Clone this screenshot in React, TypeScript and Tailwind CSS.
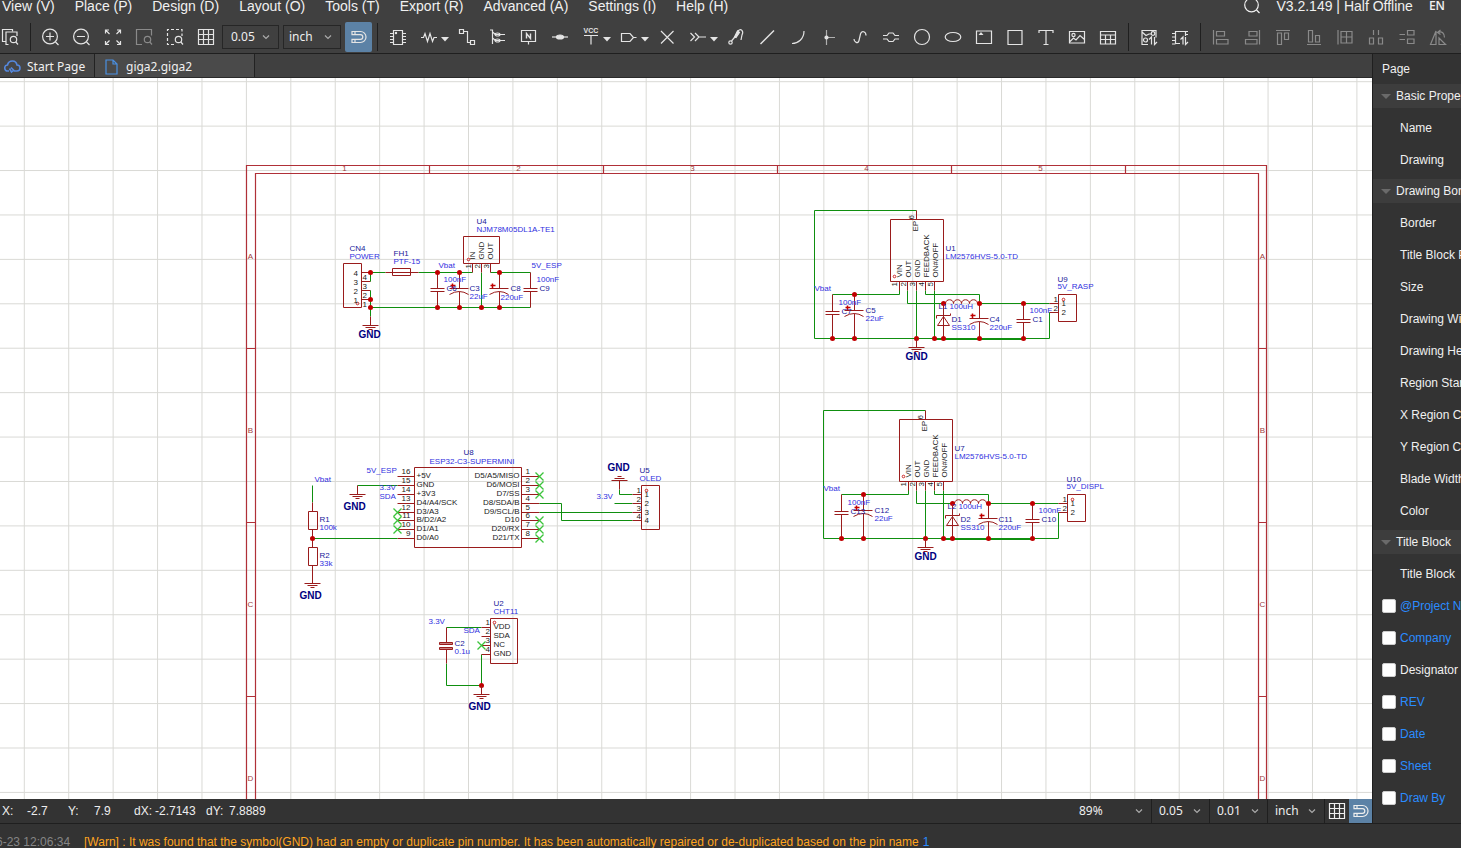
import React from "react";

const WIRE = "#0f8f0f";
const PART = "#9a1c1c";
const DOT = "#c00000";
const REF = "#20209a";
const VALUE = "#3030e0";

/* ---------- icons ---------- */

interface IconProps {
  children: React.ReactNode;
  size?: number;
}

const Icon = ({ children, size = 20 }: IconProps) => (
  <svg width={size} height={size} viewBox="0 0 20 20" fill="none" stroke="currentColor" strokeWidth="1.2" className="shrink-0" aria-hidden="true">
    {children}
  </svg>
);

const Lens = () => (
  <>
    <circle cx="13.5" cy="12.5" r="3.2" />
    <path d="M15.8 15l2.2 2.5" />
  </>
);

const GridIcon = () => (
  <Icon>
    <path d="M2.5 2.5h15v15h-15zM2.5 7.5h15M2.5 12.5h15M7.5 2.5v15M12.5 2.5v15" />
  </Icon>
);

const MagnetIcon = () => (
  <Icon>
    <path d="M3 4.5h8.5a5.5 5.5 0 0 1 0 11H3v-3.2h8.5a2.3 2.3 0 0 0 0-4.6H3z" />
    <path d="M6 4.5v3.2M6 12.3v3.2" />
  </Icon>
);

const Chevron = () => (
  <svg width="8" height="8" viewBox="0 0 8 8" fill="none" stroke="#aaaaaa" strokeWidth="1.2" className="pointer-events-none absolute right-2" aria-hidden="true">
    <path d="M1 2.5l3 3 3-3" />
  </svg>
);

interface Tool {
  label: string;
  icon: React.ReactNode;
  menu?: boolean;
  dim?: boolean;
}

const viewTools: Tool[] = [
  { label: "Zoom In", icon: <><circle cx="9" cy="9.5" r="7.4" /><path d="M9 5.5v8M5 9.5h8M14.5 15l3 3" /></> },
  { label: "Zoom Out", icon: <><circle cx="9" cy="9.5" r="7.4" /><path d="M5 9.5h8M14.5 15l3 3" /></> },
  { label: "Fit All", icon: <path d="M2.5 6.500v-3.500h3.500M2.5 3l4 4M17.5 6.5V3H14M17.5 3l-4 4M2.5 14v3.500H6M2.5 17.5l4-4M17.5 14v3.500H14M17.5 17.5l-4-4" /> },
  { label: "Fit Selected", dim: true, icon: <><path d="M8 17.5H2.5v-15h15v6" /><Lens /></> },
  { label: "Zoom Area", icon: <><path d="M9 17.5H2.5v-15H17v6.500" strokeDasharray="3 2" /><Lens /></> },
];

const placeTools: Tool[] = [
  { label: "Device", icon: <><path d="M5.5 3.5h9v14h-9zM2 6.5h3.500M2 9.5h3.500M2 12.5h3.500M2 15.5h3.500M14.5 6.5H18M14.5 9.5H18M14.5 12.5H18M14.5 15.5H18" /><circle cx="8" cy="6" r=".6" /></> },
  { label: "Common Library", menu: true, icon: <path d="M2 10.5h2.500l1.5-4 2.500 8 2.500-8 2.500 8 1.5-4H18" /> },
  { label: "Wire", icon: <path d="M2.5 2.5h4v4h-4zM13.5 13.5h4v4h-4zM6.5 4.5h4v11h3" /> },
  { label: "Bus", icon: <><path d="M2 3h2.500v14M4.5 5l3 2.500H17M4.5 11l3 2.500H17" /><ellipse cx="9.5" cy="7.5" rx="2.5" ry="1.5" /><ellipse cx="9.5" cy="13.5" rx="2.5" ry="1.5" /></> },
  { label: "Net Label", icon: <><path d="M2.5 3.5h14v11h-14zM9.5 14.5v3" /><path d="M7.5 11.5v-5l4 5v-5" strokeWidth="1.4" /></> },
  { label: "Junction", icon: <><path d="M2 10h16" /><ellipse cx="10" cy="10" rx="3.5" ry="2" fill="currentColor" /></> },
  { label: "Net Flag", menu: true, icon: <><path d="M3 8.5h14M10 8.5v9" /><text x="10" y="6" textAnchor="middle" fontSize="7" fontWeight="bold" fill="currentColor" stroke="none" className="font-['Liberation_Sans',sans-serif]">VCC</text></> },
  { label: "Net Port", menu: true, icon: <path d="M2.5 6.5H11l3.500 4-3.500 4H2.5zM14.5 10.5h3" /> },
  { label: "No Connect", icon: <path d="M4 4l12.500 12.500M16.5 4L4 16.5" /> },
  { label: "Bus Entry", menu: true, icon: <path d="M2.5 6l4 4-4 4M7 6l4 4-4 4M11 10h7" /> },
  { label: "Probe", icon: <><circle cx="4.5" cy="15.5" r="1.7" /><path d="M5.5 14l5-6" /><path d="M8.5 10l3-6 2 1.500-3.500 5z" fill="currentColor" /><path d="M12 4c3-3 6 0 4 4l-1 5" /></> },
  { label: "Line", icon: <path d="M3.5 17L17 3.5" strokeWidth="1.5" /> },
  { label: "Arc", icon: <path d="M4 16.5C10 16.5 16 12 16 4" /> },
  { label: "Center", icon: <><path d="M7.5 3v15M7.5 10.5H16" stroke="#b0b0b0" /><circle cx="7.5" cy="10.5" r="1.5" fill="currentColor" /></> },
  { label: "Bezier", icon: <path d="M4 12c0 3 4 5.500 5 1.500l1.500-6.500c1-4 5.500-2.500 5.500 1.500" /> },
  { label: "Bus Ripper", icon: <path d="M2 8.5h4l2-2.500h4l2 2.500h4M2 12h4l2 2.500h4l2-2.500h4" /> },
  { label: "Circle", icon: <circle cx="10" cy="10" r="7.5" /> },
  { label: "Ellipse", icon: <ellipse cx="10" cy="10" rx="7.8" ry="4.5" /> },
  { label: "Sheet Symbol", icon: <><path d="M2.5 4h15v12.500h-15z" /><path d="M4.5 8L7 5l2.500 3z" fill="currentColor" strokeWidth="0" /></> },
  { label: "Rectangle", icon: <path d="M3 3.5h14v14H3z" /> },
  { label: "Text", icon: <path d="M3 6V3.5h14V6M10 3.5v14M7.5 17.5h5" /> },
  { label: "Image", icon: <><path d="M2.5 4.5h15V16h-15zM2.5 15l4-4L9 13l4-4.500 4.500 4" /><circle cx="6.5" cy="8" r="1.6" /></> },
  { label: "Table", icon: <path d="M2.5 4.5h15V17h-15zM2.5 8h15M2.5 12.5h15M7.5 8v9M12.5 8v9" /> },
];

const convertTools: Tool[] = [
  { label: "Convert Schematic to PCB", icon: <><path d="M9 17.5H3v-14h14v7M3 5l4 3.500L10 7h3" /><circle cx="14" cy="6.5" r="1.8" /><circle cx="6.5" cy="13" r="2" /><path d="M12.5 17.5V10L10 12.5M15.5 10v7.500L18 15" /></> },
  { label: "Update Footprint", icon: <path d="M10 16.5H5.5v-12h10V9M2 6.5h3.500M2 10h3.500M2 13.5h3.500M2 17h3.500M15.5 4.5H18M15.5 7.5H18M13 17.5V10l-2.500 2.500M15.5 10v7.500L18 15" /> },
];

const alignTools: Tool[] = [
  { label: "Align Left", icon: <path d="M2.5 3v14.500M5.5 4.5h8V9h-8zM5.5 12.5H17V17H5.5z" /> },
  { label: "Align Right", icon: <path d="M17.5 3v14.500M7 4.5h8V9H7zM3.5 12.5H15V17H3.5z" /> },
  { label: "Align Top", icon: <path d="M3 3.5h14M4.5 6h4v11.500h-4zM11.5 6h4v6.500h-4z" /> },
  { label: "Align Bottom", icon: <path d="M3 17.5h14M4.5 3.5h4V15h-4zM11.5 8.5h4V15h-4z" /> },
  { label: "Align Grid", icon: <path d="M3 3v14.500M6 4.5h11V16H6zM6 10h11M11.5 4.5V16" /> },
  { label: "Distribute Horizontally", icon: <path d="M7.5 3v5M12.5 3v5M3.5 11h4v6h-4zM12.5 11h4v6h-4z" /> },
  { label: "Distribute Vertically", icon: <path d="M2.5 7.5H8M2.5 12.5H8M10.5 3.5H17V8h-6.500zM10.5 12H17v4.500h-6.500z" /> },
  { label: "Rotate Left", icon: <path d="M2.5 17.5L8 4v13.500zM11 17.5V11l6.500 6.500zM10 5.5c4-2 6.500 1 6.500 5M12.5 3l-3 2.500 3 2" /> },
  { label: "Rotate Right", icon: <path d="M2.5 17L9 4v13z" /> },
];

/* ---------- top bars ---------- */

const menus = ["View (V)", "Place (P)", "Design (D)", "Layout (O)", "Tools (T)", "Export (R)", "Advanced (A)", "Settings (I)", "Help (H)"];

const MenuBar = () => (
  <header className="flex h-3 items-center justify-between pr-4 pl-[2px] text-sm leading-3 text-[#f0f0f0]">
    <nav className="flex gap-5 whitespace-nowrap">
      {menus.map((m) => <button key={m} type="button" className="leading-3">{m}</button>)}
    </nav>
    <div className="flex items-center gap-4 leading-3 whitespace-nowrap">
      <button type="button" aria-label="Search" className="-mr-0.5">
        <Icon><circle cx="9.5" cy="9" r="6.8" /><path d="M14.5 14l3 3" /></Icon>
      </button>
      <span>V3.2.149 | Half Offline</span>
      <button type="button" className="font-['Open_Sans',sans-serif] text-xs leading-3 font-semibold">EN</button>
    </div>
  </header>
);

const ToolButton = ({ label, icon, menu, dim }: Tool) => (
  <button type="button" aria-label={label} title={label} className={`flex h-7 shrink-0 items-center ${menu ? "w-[38px] gap-0.5 pl-1.5" : "w-[31px] justify-center"} ${dim ? "text-[#8a8a8a]" : "text-[#e4e4e4]"}`}>
    <Icon>{icon}</Icon>
    {menu && (
      <svg width="8" height="5" viewBox="0 0 8 5" className="mt-1 shrink-0" aria-hidden="true"><path d="M0 0h8L4 4.5z" fill="#e4e4e4" /></svg>
    )}
  </button>
);

const Separator = () => (
  <div className="flex h-7 w-[10px] shrink-0 justify-center"><div className="w-px bg-[#1f1f1f]" /></div>
);

const Picker = ({ label, value, className }: { label: string; value: string; className: string }) => (
  <div className={`relative flex shrink-0 items-center font-['Noto_Sans',sans-serif] text-xs text-[#eeeeee] ${className}`}>
    <select aria-label={label} defaultValue={value} className="h-full w-full appearance-none bg-transparent outline-none">
      <option>{value}</option>
    </select>
    <Chevron />
  </div>
);

const Toolbar = () => (
  <div className="mt-[9px] flex h-8 items-center overflow-hidden">
    <div className="-ml-1.5 flex"><ToolButton label="Find" icon={<><path d="M6 14.5H2.5v-12h10v2" /><path d="M8.5 17.5H6V5h11v4" /><Lens /></>} /></div>
    <Separator />
    {viewTools.map((t) => <ToolButton key={t.label} {...t} />)}
    <button type="button" aria-label="Grid" className="flex h-7 w-[31px] shrink-0 items-center justify-center text-[#e4e4e4]"><GridIcon /></button>
    <Picker label="Grid size" value="0.05" className="ml-px h-6 w-[57px] border border-[#262626] pl-2" />
    <Picker label="Unit" value="inch" className="ml-1 h-6 w-[58px] border border-[#262626] pl-[5px]" />
    <button type="button" aria-label="Snap" className="ml-1 flex h-[30px] w-[27px] shrink-0 items-center justify-center rounded-xs bg-[#5c82a6] text-[#e4e4e4]"><MagnetIcon /></button>
    <Separator />
    {placeTools.map((t) => <ToolButton key={t.label} {...t} />)}
    <Separator />
    {convertTools.map((t) => <ToolButton key={t.label} {...t} />)}
    <Separator />
    {alignTools.map((t) => <ToolButton key={t.label} {...t} dim />)}
  </div>
);

const Tabs = () => (
  <div className="flex h-6 border-b border-[#2a2a2a] bg-[#404040] font-['Noto_Sans',sans-serif] text-xs text-[#f0f0f0]">
    <button type="button" className="flex w-[95px] items-center gap-1.5 border-r border-[#222222] bg-[#464646] pt-0.5 pl-1 whitespace-nowrap">
      <svg width="17" height="14" viewBox="0 0 17 14" fill="none" stroke="#5588dd" strokeWidth="1.6" aria-hidden="true">
        <path d="M5 11H4a3 3 0 0 1-.5-6C4 2.5 6 1 8.5 1S12.5 2.5 13 5a3 3 0 0 1 0 6h-2.500L7 7.500M5.5 8.5l2 3.500 2.500-2" />
      </svg>
      Start Page
    </button>
    <button type="button" className="flex w-40 items-center gap-2 border-r border-[#222222] bg-[#4a4a4a] pt-0.5 pl-2.5 whitespace-nowrap">
      <svg width="13" height="16" viewBox="0 0 13 16" fill="none" stroke="#4a90e2" strokeWidth="1.2" aria-hidden="true">
        <path d="M1 1h7l4 4v10H1zM8 1v4h4" />
      </svg>
      giga2.giga2
    </button>
  </div>
);

/* ---------- schematic primitives ---------- */

const Wire = ({ d }: { d: string }) => <path d={d} stroke={WIRE} fill="none" />;
const Part = ({ d }: { d: string }) => <path d={d} stroke={PART} fill="none" />;

const Dots = ({ at }: { at: number[][] }) => (
  <>{at.map(([x, y]) => <circle key={`${x}-${y}`} cx={x} cy={y} r="2.5" fill={DOT} />)}</>
);

interface TextProps {
  x: number;
  y: number;
  children: React.ReactNode;
}

const Ref = ({ x, y, children }: TextProps) => <text x={x} y={y} fill={REF}>{children}</text>;
const Value = ({ x, y, children }: TextProps) => <text x={x} y={y} fill={VALUE}>{children}</text>;
const Pin = ({ x, y, children, end }: TextProps & { end?: boolean }) => (
  <text x={x} y={y} fill="#222222" textAnchor={end ? "end" : "start"}>{children}</text>
);
const VPin = ({ x, y, children }: TextProps) => (
  <text transform={`translate(${x} ${y}) rotate(-90)`} fill="#222222">{children}</text>
);
const PinOne = ({ x, y }: { x: number; y: number }) => <circle cx={x} cy={y} r="1.3" fill="none" stroke={DOT} strokeWidth=".8" />;

const Ground = ({ x, y, up, tx, ty }: { x: number; y: number; up?: boolean; tx: number; ty: number }) => {
  const s = up ? -1 : 1;
  return (
    <>
      <Part d={`M${x} ${y - 9 * s}V${y}M${x - 8} ${y}h16M${x - 5} ${y + 2 * s}h10M${x - 2} ${y + 4 * s}h4`} />
      <text x={tx} y={ty} fill="#000080" className="text-[10px] font-bold">GND</text>
    </>
  );
};

const Cap = ({ x, y, top, bottom }: { x: number; y: number; top: number; bottom: number }) => (
  <Part d={`M${x} ${top}V${y}M${x - 7} ${y}h14M${x - 7} ${y + 3}h14M${x} ${y + 3}V${bottom}`} />
);

const PolCap = ({ x, y, top, bottom }: { x: number; y: number; top: number; bottom: number }) => (
  <>
    <Part d={`M${x} ${top}V${y}M${x - 10} ${y}h19M${x - 10} ${y + 6}q10 -6 19 0M${x} ${y + 3}V${bottom}`} />
    <path d={`M${x - 9} ${y - 3}h5M${x - 7} ${y - 5}v5`} stroke={DOT} strokeWidth="1.5" />
  </>
);

const NoConnect = ({ x, y }: { x: number; y: number }) => (
  <path d={`M${x - 4} ${y - 4}l8 8M${x + 4} ${y - 4}l-8 8`} stroke="#3cc43c" strokeWidth="1.3" />
);

/* ---------- schematic blocks ---------- */

const PowerInput = () => (
  <g>
    <Part d="M343 263h18v44h-18zM361 272h9M361 281h9M361 290h9M361 299h9" />
    <Wire d="M370 272v9M370 290v26M370 272h15M418 272h54M490 272h40M370 307h160M481 272v35" />
    <Part d="M385 272h33M392 268h18v7h-18zM463 236h36v27h-36zM472 263v9M481 263v9M490 263v9" />
    <Cap x={437} y={288} top={272} bottom={307} />
    <PolCap x={459} y={288} top={272} bottom={307} />
    <PolCap x={499} y={288} top={272} bottom={307} />
    <Cap x={530} y={288} top={272} bottom={307} />
    <Dots at={[[370, 272], [370, 299], [370, 307], [437, 272], [459, 272], [499, 272], [437, 307], [459, 307], [481, 307], [499, 307]]} />
    <Ground x={370} y={325} tx={358} ty={337} />
    <PinOne x={357} y={303} />
    <PinOne x={468} y={259} />
    {[4, 3, 2, 1].map((n, i) => (
      <React.Fragment key={n}>
        <Pin x={353} y={275 + i * 9}>{n}</Pin>
        <Pin x={362} y={279 + i * 9}>{n}</Pin>
      </React.Fragment>
    ))}
    {["IN", "GND", "OUT"].map((name, i) => (
      <React.Fragment key={name}>
        <VPin x={474 + i * 9} y={259}>{name}</VPin>
        <VPin x={470 + i * 9} y={268}>{i + 1}</VPin>
      </React.Fragment>
    ))}
    <Ref x={349} y={250}>CN4</Ref>
    <Value x={349} y={258}>POWER</Value>
    <Ref x={393} y={255}>FH1</Ref>
    <Value x={393} y={263}>PTF-15</Value>
    <Ref x={476} y={223}>U4</Ref>
    <Value x={476} y={231}>NJM78M05DL1A-TE1</Value>
    <Value x={438} y={267}>Vbat</Value>
    <Value x={531} y={267}>5V_ESP</Value>
    <Value x={443} y={281}>100nF</Value>
    <Ref x={446} y={290}>C6</Ref>
    <Ref x={469} y={290}>C3</Ref>
    <Value x={469} y={298}>22uF</Value>
    <Ref x={510} y={290}>C8</Ref>
    <Value x={500} y={299}>220uF</Value>
    <Value x={536} y={281}>100nF</Value>
    <Ref x={539} y={290}>C9</Ref>
  </g>
);

interface BuckProps {
  x: number;
  y: number;
  chip: string;
  caps: string[];
  coil: string;
  diode: string;
  conn: string;
  out: string;
}

// origin is the top left corner of the feedback loop
const Buck = ({ x, y, chip, caps, coil, diode, conn, out }: BuckProps) => (
  <g transform={`translate(${x} ${y})`}>
    <Wire d="M102 0H0V128H235V102H243M18 84H85V75M93 80V93H129M111 80V84H165V93M102 80V128M120 80V128M165 93H235" />
    <path d="M120 128.500H209" stroke={WIRE} strokeWidth="2" />
    <Part d="M76 9h53v62H76zM102 0v9M85 71v9M93 71v9M102 71v9M111 71v9M120 71v9" />
    <Part d="M129 93h2c0-5 8-5 8 0c0-5 8-5 8 0c0-5 8-5 8 0c0-5 8-5 8 0h2" />
    <Part d="M129 93v35M123 115h12l-6-9zM122 108v-3h14v-2" />
    <Part d="M244 84h18v27h-18zM235 93h9M235 102h9" />
    <Cap x={18} y={101} top={84} bottom={128} />
    <PolCap x={40} y={100} top={84} bottom={128} />
    <PolCap x={165} y={108} top={93} bottom={128} />
    <Cap x={209} y={109} top={93} bottom={128} />
    <Dots at={[[40, 84], [129, 93], [165, 93], [209, 93], [18, 128], [40, 128], [102, 128], [120, 128], [129, 128], [165, 128], [209, 128]]} />
    <Ground x={102} y={137} tx={91} ty={149} />
    <PinOne x={80} y={66} />
    <PinOne x={249} y={89} />
    <VPin x={99} y={9}>6</VPin>
    <VPin x={103} y={21}>EP</VPin>
    {["VIN", "OUT", "GND", "FEEDBACK", "ON#/OFF"].map((name, i) => (
      <React.Fragment key={name}>
        <VPin x={87 + i * 9} y={67}>{name}</VPin>
        <VPin x={82 + i * 9} y={76}>{i + 1}</VPin>
      </React.Fragment>
    ))}
    <Pin x={247} y={95}>1</Pin>
    <Pin x={247} y={104}>2</Pin>
    <Pin x={239} y={91}>1</Pin>
    <Pin x={239} y={100}>2</Pin>
    <Ref x={131} y={40}>{chip}</Ref>
    <Value x={131} y={48}>LM2576HVS-5.0-TD</Value>
    <Value x={0} y={80}>Vbat</Value>
    <Value x={24} y={94}>100nF</Value>
    <Ref x={27} y={103}>{caps[0]}</Ref>
    <Ref x={51} y={102}>{caps[1]}</Ref>
    <Value x={51} y={110}>22uF</Value>
    <Ref x={124} y={98}>{coil}</Ref>
    <Value x={135} y={98}>100uH</Value>
    <Ref x={137} y={111}>{diode}</Ref>
    <Value x={137} y={119}>SS310</Value>
    <Ref x={175} y={111}>{caps[2]}</Ref>
    <Value x={175} y={119}>220uF</Value>
    <Value x={215} y={102}>100nF</Value>
    <Ref x={218} y={111}>{caps[3]}</Ref>
    <Ref x={243} y={71}>{conn}</Ref>
    <Value x={243} y={78}>{out}</Value>
  </g>
);

const leftPins = ["+5V", "GND", "+3V3", "D4/A4/SCK", "D3/A3", "B/D2/A2", "D1/A1", "D0/A0"];
const rightPins = ["D5/A5/MISO", "D6/MOSI", "D7/SS", "D8/SDA/B", "D9/SCL/B", "D10", "D20/RX", "D21/TX"];
const pinY = [476, 485, 494, 503, 512, 520, 529, 538];

const Controller = () => (
  <g>
    <Part d="M414 467h107v80H414z" />
    {pinY.map((y, i) => (
      <React.Fragment key={y}>
        <Part d={`M397 ${y}h17M521 ${y}h18`} />
        <Pin x={416} y={y + 1}>{leftPins[i]}</Pin>
        <Pin x={410} y={y - 3} end>{16 - i}</Pin>
        <Pin x={519} y={y + 1} end>{rightPins[i]}</Pin>
        <Pin x={525} y={y - 3}>{i + 1}</Pin>
        {i > 3 && i < 7 && <NoConnect x={397} y={y} />}
        {i !== 3 && i !== 4 && <NoConnect x={539} y={y} />}
      </React.Fragment>
    ))}
    <Wire d="M357 485h40M312 538h85M312 485v17M539 503h22v17h71M539 512h93" />
    <Ground x={357} y={494} tx={343} ty={509} />
    <Part d="M312 502v9M308 511h9v18h-9zM312 529v18M308 547h9v18h-9zM312 565v10" />
    <Dots at={[[312, 538]]} />
    <Ground x={312} y={583} tx={299} ty={598} />
    <Value x={314} y={481}>Vbat</Value>
    <Ref x={319} y={521}>R1</Ref>
    <Value x={319} y={529}>100k</Value>
    <Ref x={319} y={557}>R2</Ref>
    <Value x={319} y={565}>33k</Value>
    <Value x={366} y={472}>5V_ESP</Value>
    <Value x={379} y={489}>3.3V</Value>
    <Value x={379} y={498}>SDA</Value>
    <Ref x={463} y={454}>U8</Ref>
    <Value x={429} y={463}>ESP32-C3-SUPERMINI</Value>
  </g>
);

const Display = () => (
  <g>
    <Wire d="M619 489v5h13M614 503h18" />
    <Part d="M641 485h18v44h-18z" />
    {[494, 503, 512, 520].map((y, i) => (
      <React.Fragment key={y}>
        <Part d={`M632 ${y}h9`} />
        <Pin x={644} y={y + 2}>{i + 1}</Pin>
        <Pin x={636} y={y - 2}>{i + 1}</Pin>
      </React.Fragment>
    ))}
    <PinOne x={646} y={490} />
    <Ground x={619} y={480} up tx={607} ty={470} />
    <Value x={596} y={498}>3.3V</Value>
    <Ref x={639} y={472}>U5</Ref>
    <Value x={639} y={480}>OLED</Value>
  </g>
);

const Sensor = () => (
  <g>
    <Wire d="M446 627h35M446 663v22h35v-31" />
    <Part d="M490 618h27v45h-27zM446 627v15M446 649v14" />
    <path d="M439 642h13v2h-13zM439 647h13v2h-13z" fill="#c98080" stroke={PART} />
    {["VDD", "SDA", "NC", "GND"].map((name, i) => (
      <React.Fragment key={name}>
        <Part d={`M481 ${627 + i * 9}h9`} />
        <Pin x={493} y={628 + i * 9}>{name}</Pin>
        <Pin x={485} y={624 + i * 9}>{i + 1}</Pin>
      </React.Fragment>
    ))}
    <PinOne x={494} y={622} />
    <NoConnect x={481} y={645} />
    <Dots at={[[481, 685]]} />
    <Ground x={481} y={694} tx={468} ty={709} />
    <Value x={428} y={623}>3.3V</Value>
    <Value x={463} y={632}>SDA</Value>
    <Ref x={454} y={645}>C2</Ref>
    <Value x={454} y={653}>0.1u</Value>
    <Ref x={493} y={605}>U2</Ref>
    <Value x={493} y={613}>CHT11</Value>
  </g>
);

const SheetFrame = () => (
  <g>
    <path d="M246 840V165h1020v675M255 840V173h1003v667M429 165v8M603 165v8M777 165v8M951 165v8M1125 165v8" stroke="#b03038" strokeWidth="1.2" fill="none" />
    {[348, 522, 696].map((y) => <path key={y} d={`M246 ${y}h9M1258 ${y}h8`} stroke="#b03038" />)}
    {[1, 2, 3, 4, 5].map((n) => <text key={n} x={170 + n * 174} y={170} fill="#a04040" textAnchor="middle">{n}</text>)}
    {["A", "B", "C", "D"].map((c, i) => (
      <React.Fragment key={c}>
        <text x={250} y={258 + i * 174} fill="#a04040" textAnchor="middle">{c}</text>
        <text x={1262} y={258 + i * 174} fill="#a04040" textAnchor="middle">{c}</text>
      </React.Fragment>
    ))}
  </g>
);

const Canvas = () => (
  <main className="min-h-0 flex-1 bg-white">
    <svg className="h-full w-full text-[8px]" role="img" aria-label="Schematic">
      <defs>
        <pattern id="grid" x="23.8" y="3.2" width="44.42" height="44.42" patternUnits="userSpaceOnUse">
          <path d="M.5 0v44.42M0 .5h44.42" stroke="#d9d9d5" fill="none" />
        </pattern>
      </defs>
      <rect width="100%" height="100%" fill="url(#grid)" />
      <g transform="translate(0.5 -77.5)">
        <SheetFrame />
        <PowerInput />
        <Buck x={814} y={210} chip="U1" caps={["C7", "C5", "C4", "C1"]} coil="L1" diode="D1" conn="U9" out="5V_RASP" />
        <Buck x={823} y={410} chip="U7" caps={["C13", "C12", "C11", "C10"]} coil="L2" diode="D2" conn="U10" out="5V_DISPL" />
        <Controller />
        <Display />
        <Sensor />
      </g>
    </svg>
  </main>
);

/* ---------- status bar, panel, log ---------- */

const StatusBar = () => (
  <footer className="flex h-6 shrink-0 items-center justify-between bg-[#333333] text-xs text-[#eeeeee]">
    <div className="flex pl-[2px] whitespace-nowrap">
      <span className="w-[25px]">X:</span>
      <span className="w-[41px]">-2.7</span>
      <span className="w-[26px]">Y:</span>
      <span className="w-10">7.9</span>
      <span className="w-[21px]">dX:</span>
      <span className="w-[51px]">-2.7143</span>
      <span className="w-[23px]">dY:</span>
      <span>7.8889</span>
    </div>
    <div className="flex h-full">
      <Picker label="Zoom" value="89%" className="w-[79px] pl-[7px]" />
      <Picker label="Grid" value="0.05" className="w-[58px] border-l border-[#1f1f1f] pl-[7px]" />
      <Picker label="Alt grid" value="0.01" className="w-[58px] border-l border-[#1f1f1f] pl-[7px]" />
      <Picker label="Status unit" value="inch" className="w-[57px] border-l border-[#1f1f1f] pl-[7px]" />
      <button type="button" aria-label="Toggle grid" className="flex w-[25px] items-center justify-center border-l border-[#1f1f1f]"><GridIcon /></button>
      <button type="button" aria-label="Toggle snap" className="flex w-[23px] items-center justify-center bg-[#5c82a6]"><MagnetIcon /></button>
    </div>
  </footer>
);

const Section = ({ title, children }: { title: string; children: React.ReactNode }) => (
  <section>
    <button type="button" className="flex h-6 w-full items-center gap-[5px] bg-[#3d3d3d] pl-2">
      <svg width="10" height="5" viewBox="0 0 10 5" className="shrink-0" aria-hidden="true"><path d="M0 0h10L5 5z" fill="#6a6a6a" /></svg>
      {title}
    </button>
    <div className="pt-1 pb-[3px]">{children}</div>
  </section>
);

const Row = ({ label }: { label: string }) => <div className="flex h-8 items-center pl-[27px]">{label}</div>;

const CheckRow = ({ label, plain }: { label: string; plain?: boolean }) => (
  <label className={`flex h-8 items-center gap-1 pl-[9px] ${plain ? "" : "text-[#2a8cff]"}`}>
    <input type="checkbox" className="size-3.5 shrink-0 appearance-none rounded-xs border border-[#cccccc] bg-white" />
    {label}
  </label>
);

const borderRows = ["Border", "Title Block Position", "Size", "Drawing Width", "Drawing Height", "Region Start", "X Region Count", "Y Region Count", "Blade Width", "Color"];
const titleRows = ["@Project Name", "Company", "Designator", "REV", "Date", "Sheet", "Draw By"];

const PropertyPanel = () => (
  <aside className="w-[89px] shrink-0 overflow-hidden border-l border-[#1f1f1f] bg-[#333333] text-xs whitespace-nowrap text-[#f0f0f0]">
    <h2 className="flex h-[30px] items-center pl-[9px]">Page</h2>
    <Section title="Basic Properties">
      <Row label="Name" />
      <Row label="Drawing" />
    </Section>
    <Section title="Drawing Border">
      {borderRows.map((r) => <Row key={r} label={r} />)}
    </Section>
    <Section title="Title Block">
      <Row label="Title Block" />
      {titleRows.map((r) => <CheckRow key={r} label={r} plain={r === "Designator"} />)}
    </Section>
  </aside>
);

const LogBar = () => (
  <div className="flex h-[25px] shrink-0 overflow-hidden border-t border-[#1f1f1f] bg-[#333333] pt-3 text-xs leading-3 whitespace-nowrap">
    <time className="-ml-1 w-[88px] text-[#858585]">6-23 12:06:34</time>
    <p className="text-[#ffa51f]">[Warn] : It was found that the symbol(GND) had an empty or duplicate pin number. It has been automatically repaired or de-duplicated based on the pin name</p>
    <a href="#gnd" className="ml-1 text-[#2a8cff]">1</a>
  </div>
);

const App = () => (
  <div className="flex h-screen flex-col overflow-hidden bg-[#404040] font-['Liberation_Sans',sans-serif]">
    <MenuBar />
    <Toolbar />
    <div className="flex min-h-0 flex-1 border-t border-[#1f1f1f]">
      <div className="flex min-w-0 flex-1 flex-col">
        <Tabs />
        <Canvas />
        <StatusBar />
      </div>
      <PropertyPanel />
    </div>
    <LogBar />
  </div>
);

export default App;
